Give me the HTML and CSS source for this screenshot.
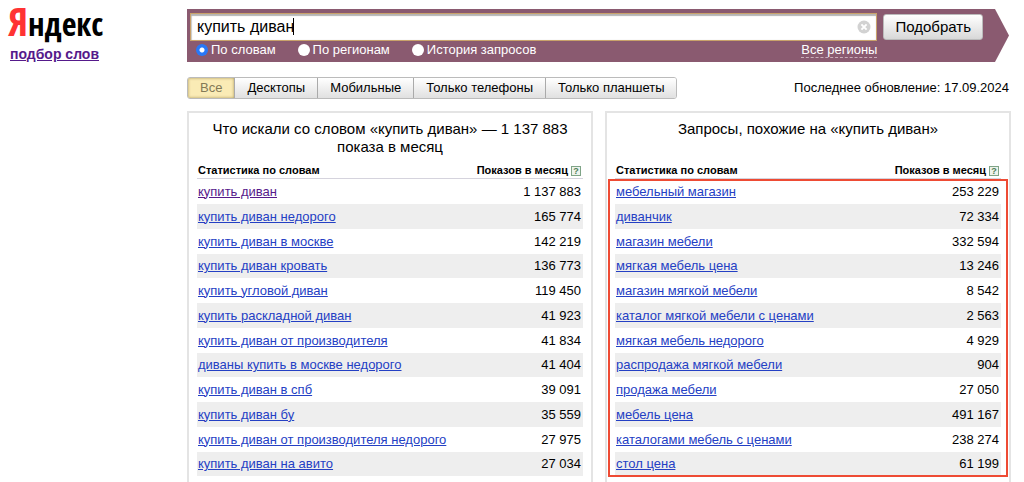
FILE: index.html
```html
<!DOCTYPE html>
<html lang="ru">
<head>
<meta charset="utf-8">
<title>Подбор слов</title>
<link rel="stylesheet" href="styles.css">
</head>
<body>
<div class="page">
  <aside class="brand">
    <div class="logo"><span class="logo-initial">Я</span>ндекс</div>
    <a class="service" href="#">подбор слов</a>
  </aside>
  <main class="content">
    <form class="search">
      <div class="search-main">
        <div class="field">
          <input class="query" type="text" value="купить диван" aria-label="Запрос">
          <span class="query-caret"></span>
          <button class="clear" type="button" aria-label="Очистить">
            <svg viewBox="0 0 14 14" width="14" height="14"><circle cx="7" cy="7" r="6.5" fill="#d2d2d2"/><path d="M4.4 4.4l5.2 5.2M9.6 4.4L4.4 9.6" stroke="#fff" stroke-width="2"/></svg>
          </button>
        </div>
        <div class="options">
          <label class="option"><input type="radio" name="mode" checked>По словам</label>
          <label class="option"><input type="radio" name="mode">По регионам</label>
          <label class="option"><input type="radio" name="mode">История запросов</label>
          <a class="regions" href="#">Все регионы</a>
        </div>
      </div>
      <button class="submit" type="submit">Подобрать</button>
    </form>
    <div class="toolbar">
      <div class="tabs">
        <button class="tab tab-active" type="button">Все</button>
        <button class="tab" type="button">Десктопы</button>
        <button class="tab" type="button">Мобильные</button>
        <button class="tab" type="button">Только телефоны</button>
        <button class="tab" type="button">Только планшеты</button>
      </div>
      <div class="updated">Последнее обновление: 17.09.2024</div>
    </div>
    <div class="panels">
      <section class="panel">
        <h2 class="title">Что искали со словом «купить диван» — 1&nbsp;137&nbsp;883 показа&nbsp;в&nbsp;месяц</h2>
        <table class="stats">
          <thead><tr><th>Статистика по словам</th><th>Показов в месяц<a class="help" href="#">?</a></th></tr></thead>
          <tbody>
            <tr><td><a class="visited" href="#">купить диван</a></td><td>1 137 883</td></tr>
            <tr><td><a href="#">купить диван недорого</a></td><td>165 774</td></tr>
            <tr><td><a href="#">купить диван в москве</a></td><td>142 219</td></tr>
            <tr><td><a href="#">купить диван кровать</a></td><td>136 773</td></tr>
            <tr><td><a href="#">купить угловой диван</a></td><td>119 450</td></tr>
            <tr><td><a href="#">купить раскладной диван</a></td><td>41 923</td></tr>
            <tr><td><a href="#">купить диван от производителя</a></td><td>41 834</td></tr>
            <tr><td><a href="#">диваны купить в москве недорого</a></td><td>41 404</td></tr>
            <tr><td><a href="#">купить диван в спб</a></td><td>39 091</td></tr>
            <tr><td><a href="#">купить диван бу</a></td><td>35 559</td></tr>
            <tr><td><a href="#">купить диван от производителя недорого</a></td><td>27 975</td></tr>
            <tr><td><a href="#">купить диван на авито</a></td><td>27 034</td></tr>
          </tbody>
        </table>
      </section>
      <section class="panel">
        <h2 class="title">Запросы, похожие на «купить диван»</h2>
        <table class="stats">
          <thead><tr><th>Статистика по словам</th><th>Показов в месяц<a class="help" href="#">?</a></th></tr></thead>
          <tbody class="marked">
            <tr><td><a href="#">мебельный магазин</a></td><td>253 229</td></tr>
            <tr><td><a href="#">диванчик</a></td><td>72 334</td></tr>
            <tr><td><a href="#">магазин мебели</a></td><td>332 594</td></tr>
            <tr><td><a href="#">мягкая мебель цена</a></td><td>13 246</td></tr>
            <tr><td><a href="#">магазин мягкой мебели</a></td><td>8 542</td></tr>
            <tr><td><a href="#">каталог мягкой мебели с ценами</a></td><td>2 563</td></tr>
            <tr><td><a href="#">мягкая мебель недорого</a></td><td>4 929</td></tr>
            <tr><td><a href="#">распродажа мягкой мебели</a></td><td>904</td></tr>
            <tr><td><a href="#">продажа мебели</a></td><td>27 050</td></tr>
            <tr><td><a href="#">мебель цена</a></td><td>491 167</td></tr>
            <tr><td><a href="#">каталогами мебель с ценами</a></td><td>238 274</td></tr>
            <tr><td><a href="#">стол цена</a></td><td>61 199</td></tr>
          </tbody>
        </table>
      </section>
    </div>
  </main>
</div>
</body>
</html>
```
FILE: styles.css
```css
* { box-sizing: border-box; }
body {
  margin: 0;
  background: #fff;
  color: #000;
  font: 13px/16px "Liberation Sans", Arial, sans-serif;
}
button, input { font: inherit; color: inherit; margin: 0; }
.page { display: flex; }
.brand { flex: 0 0 187px; padding-left: 8px; }
.logo {
  height: 46px;
  font: 32px/42px "DejaVu Sans Condensed", sans-serif;
  font-family: "Liberation Sans Narrow", "Open Sans Condensed", "DejaVu Sans Condensed", sans-serif;
  white-space: nowrap;
}
.logo-initial { color: #f33; font-size: 40px; }
.service { margin-left: 2px; color: #551a8b; font-size: 14px; font-weight: bold; }
.content { flex: 1; min-width: 0; padding: 9px 13px 0 0; }

.search {
  display: flex;
  align-items: flex-start;
  gap: 6px;
  margin-right: 2px;
  padding: 4px 26px 3px 3px;
  background: #8a5a70;
  clip-path: polygon(0 0, calc(100% - 14px) 0, 100% 50%, calc(100% - 14px) 100%, 0 100%);
}
.search-main { flex: 1; min-width: 0; }
.field { position: relative; }
.query {
  display: block;
  width: 100%;
  height: 28px;
  padding: 0 30px 0 6px;
  border: 1px solid #c9a26b;
  background: #fff;
  box-shadow: inset 0 2px 1px #b5b5b5, inset 1px 0 1px #ccc;
  font-size: 16px;
  outline: none;
}
.query-caret { position: absolute; left: 103px; top: 5px; width: 1px; height: 17px; background: #000; }
.clear { position: absolute; right: 6px; top: 7px; padding: 0; border: 0; background: none; line-height: 0; }
.options { display: flex; align-items: center; gap: 22px; padding: 0 0 0 6px; color: #fff; line-height: 18px; }
.option { display: flex; align-items: center; gap: 3px; }
.option input {
  appearance: none;
  width: 12px;
  height: 12px;
  border-radius: 50%;
  background: #fff;
}
.option input:checked { background: radial-gradient(circle, #fff 2px, #2878f8 3px); }
.regions { margin-left: auto; color: #fff; text-decoration: none; border-bottom: 1px dashed #c9adb9; line-height: 15px; }
.submit {
  height: 26px;
  margin-top: 1px;
  padding: 0 11px;
  border: 1px solid #bbb;
  border-radius: 3px;
  background: linear-gradient(#fff, #d8d8d8);
  font-size: 15px;
}

.toolbar { display: flex; align-items: center; justify-content: space-between; padding: 15px 2px 12px 0; }
.tabs { display: flex; border: 1px solid #bbb; border-radius: 3px; overflow: hidden; }
.tab { height: 20px; padding: 0 12px; border: 0; border-left: 1px solid #aaa; background: linear-gradient(#fff, #e0e0e0); line-height: 18px; }
.tab-active { border-left: 0; background: #faebb5; color: #837957; box-shadow: inset 0 0 3px #a79555; }

.panels { display: grid; grid-template-columns: 1fr 1fr; gap: 12px; }
.panel { padding: 7px 8px 12px; border: 2px solid #e4e4e4; }
.title { min-height: 36px; margin: 0 0 6px; font-size: 15px; line-height: 18px; font-weight: normal; text-align: center; }
.stats { width: 100%; border-collapse: separate; border-spacing: 0; }
.stats th, .stats td { padding: 0 2px 0 1px; text-align: left; }
.stats th { height: 17px; border-bottom: 1px solid #d5d3dd; font-size: 11px; line-height: 16px; white-space: nowrap; }
.stats th:last-child, .stats td:last-child { text-align: right; }
.stats td { height: 25px; line-height: 16px; }
.stats tr:nth-child(4n) td { height: 24px; }
.stats tbody tr:nth-child(even) { background: #eee; }
.stats a { color: #2440c4; }
.stats .visited { color: #551a8b; }
.stats .help {
  display: inline-block;
  width: 10px;
  height: 10px;
  margin-left: 3px;
  border: 1px solid #7fa487;
  background: #edf3ec;
  color: #4f7e58;
  font-size: 9px;
  line-height: 8px;
  text-align: center;
  text-decoration: none;
  vertical-align: 0;
}
.marked { position: relative; }
.marked::after { content: ""; position: absolute; inset: 0 -7px -1px; border: 2px solid #ee4b34; pointer-events: none; }
```
